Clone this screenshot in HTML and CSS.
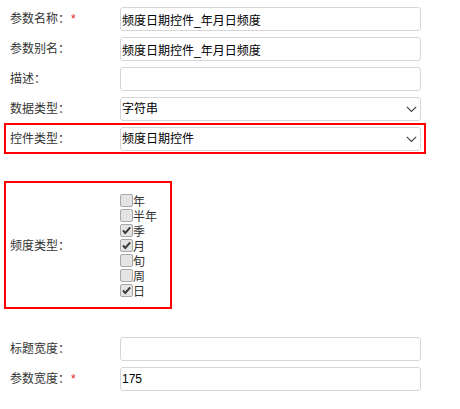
FILE: index.html
```html
<!DOCTYPE html>
<html lang="zh-CN">
<head>
    <meta charset="UTF-8">
    <meta name="viewport" content="width=device-width, initial-scale=1.0">
    <title>参数设置</title>
    <link rel="stylesheet" href="styles.css">
</head>
<body>
    <form class="param-form">
        <div class="row">
            <label class="row-label">参数名称：<span class="req">*</span></label>
            <input class="field" type="text" value="频度日期控件_年月日频度">
        </div>
        <div class="row">
            <label class="row-label">参数别名：</label>
            <input class="field" type="text" value="频度日期控件_年月日频度">
        </div>
        <div class="row">
            <label class="row-label">描述：</label>
            <input class="field" type="text" value="">
        </div>
        <div class="row">
            <label class="row-label">数据类型：</label>
            <div class="select-wrap">
                <select class="field select">
                    <option>字符串</option>
                </select>
                <svg class="chevron" width="11" height="7" viewBox="0 0 11 7"><path d="M0.8 0.8 L5.5 5.5 L10.2 0.8" fill="none" stroke="#444" stroke-width="1.2"/></svg>
            </div>
        </div>

        <div class="highlight">
            <div class="row">
                <label class="row-label">控件类型：</label>
                <div class="select-wrap">
                    <select class="field select">
                        <option>频度日期控件</option>
                    </select>
                    <svg class="chevron" width="11" height="7" viewBox="0 0 11 7"><path d="M0.8 0.8 L5.5 5.5 L10.2 0.8" fill="none" stroke="#444" stroke-width="1.2"/></svg>
                </div>
            </div>
        </div>

        <div class="freq">
            <label class="row-label">频度类型：</label>
            <div class="check-list">
                <label class="check"><span class="box"></span>年</label>
                <label class="check"><span class="box"></span>半年</label>
                <label class="check"><span class="box"><svg width="11" height="11" viewBox="0 0 11 11"><path d="M2 5.5 L4.3 8 L9.2 2.4" fill="none" stroke="#3c3c3c" stroke-width="2"/></svg></span>季</label>
                <label class="check"><span class="box"><svg width="11" height="11" viewBox="0 0 11 11"><path d="M2 5.5 L4.3 8 L9.2 2.4" fill="none" stroke="#3c3c3c" stroke-width="2"/></svg></span>月</label>
                <label class="check"><span class="box"></span>旬</label>
                <label class="check"><span class="box"></span>周</label>
                <label class="check"><span class="box"><svg width="11" height="11" viewBox="0 0 11 11"><path d="M2 5.5 L4.3 8 L9.2 2.4" fill="none" stroke="#3c3c3c" stroke-width="2"/></svg></span>日</label>
            </div>
        </div>

        <div class="row row-after">
            <label class="row-label">标题宽度：</label>
            <input class="field" type="text" value="">
        </div>
        <div class="row">
            <label class="row-label">参数宽度：<span class="req">*</span></label>
            <input class="field" type="text" value="175">
        </div>
    </form>
</body>
</html>
```

FILE: styles.css
```css
body {
    margin: 0;
    padding: 0;
    background: #fff;
    font-family: "Liberation Sans", "Noto Sans CJK SC", sans-serif;
    color: #333;
}

.param-form {
    padding-top: 7px;
}

.row {
    display: grid;
    grid-template-columns: 120px 301px;
    align-items: center;
    margin-bottom: 6px;
}

.row-label {
    padding-left: 10px;
    font-size: 12px;
    line-height: 16px;
    color: #333;
}

.req {
    color: #e02020;
    margin-left: 1px;
}

.field {
    display: block;
    width: 301px;
    height: 24px;
    box-sizing: border-box;
    margin: 0;
    padding: 0 1px;
    border: 1px solid #d6d6d6;
    border-radius: 3px;
    background: #fff;
    font-family: "Liberation Sans", "Noto Sans CJK SC", sans-serif;
    font-size: 12px;
    color: #000;
    outline: none;
}

.select-wrap {
    position: relative;
}

.select {
    appearance: none;
    -webkit-appearance: none;
}

.chevron {
    position: absolute;
    right: 4px;
    top: 9px;
    pointer-events: none;
}

.highlight {
    margin: -4px 0 0 4px;
    width: 422px;
    box-sizing: border-box;
    border: 2px solid #f00;
    padding: 2px 0 1px;
}

.highlight .row {
    grid-template-columns: 114px 301px;
    margin-bottom: 0;
}

.highlight .row-label {
    padding-left: 4px;
}

.freq {
    display: grid;
    grid-template-columns: 114px auto;
    align-items: center;
    margin: 27px 0 0 4px;
    width: 168px;
    box-sizing: border-box;
    border: 2px solid #f00;
    padding: 10px 0 9px;
}

.freq .row-label {
    padding-left: 4px;
}

.check-list {
    display: flex;
    flex-direction: column;
}

.check {
    display: flex;
    align-items: center;
    height: 15px;
    font-size: 12px;
    color: #333;
}

.box {
    display: flex;
    align-items: center;
    justify-content: center;
    width: 13px;
    height: 13px;
    box-sizing: border-box;
    border: 1px solid #a8a8a8;
    border-radius: 2px;
    background: #e4e4e4;
}

.row-after {
    margin-top: 28px;
}
```
